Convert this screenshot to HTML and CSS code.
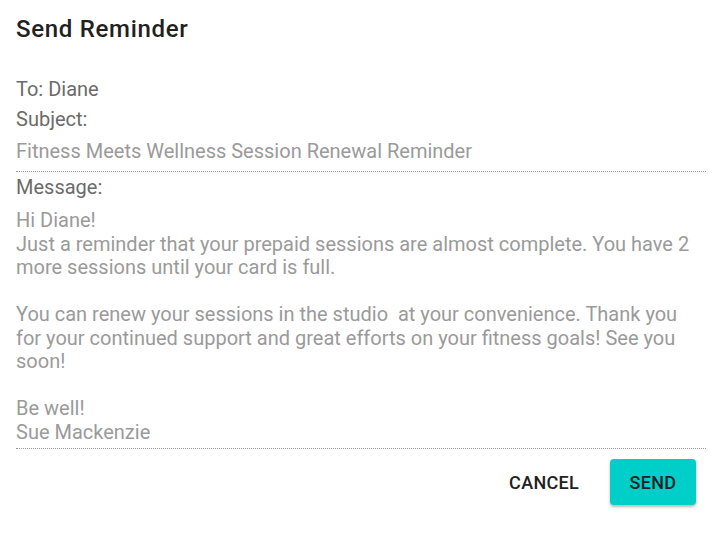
FILE: index.html
```html
<!DOCTYPE html>
<html>
<head>
<meta charset="utf-8">
<link rel="stylesheet" href="styles.css">
</head>
<body>
<div class="dialog">
  <h1 class="title">Send Reminder</h1>
  <div class="content">
    <div class="label">To: Diane</div>
    <div class="label">Subject:</div>
    <div class="input">Fitness Meets Wellness Session Renewal Reminder</div>
    <div class="label">Message:</div>
    <div class="input textarea">Hi Diane!
Just a reminder that your prepaid sessions are almost complete. You have 2 more sessions until your card is full.

You can renew your sessions in the studio  at your convenience. Thank you for your continued support and great efforts on your fitness goals! See you soon!

Be well!
Sue Mackenzie</div>
  </div>
  <div class="actions">
    <button class="btn btn-flat">CANCEL</button>
    <button class="btn btn-raised">SEND</button>
  </div>
</div>
</body>
</html>
```

FILE: styles.css
```css
html, body {
  margin: 0;
  padding: 0;
  background: #ffffff;
}
body {
  font-family: Roboto, "Noto Sans", Arial, sans-serif;
  width: 728px;
  height: 533px;
}
.dialog {
  padding: 15px 22px 0 16px;
}
.title {
  margin: 0;
  font-size: 24px;
  font-weight: 500;
  letter-spacing: 0.7px;
  line-height: 28px;
  color: #212121;
}
.content {
  margin-top: 31px;
}
.label {
  font-size: 20px;
  line-height: 30px;
  color: #6b6b6b;
}
.input {
  font-size: 20px;
  line-height: 24px;
  color: #9a9a9a;
  padding: 5px 0 8px;
  border-bottom: 1px dotted #9a9a9a;
  white-space: pre-wrap;
}
.textarea {
  line-height: 23.5px;
  padding-top: 7px;
  padding-bottom: 4px;
}
.actions {
  display: flex;
  justify-content: flex-end;
  align-items: center;
  gap: 15px;
  margin-top: 10px;
  padding-right: 10px;
}
.btn {
  font-family: Roboto, "Noto Sans", Arial, sans-serif;
  font-size: 18px;
  font-weight: 500;
  letter-spacing: 0.3px;
  color: #212121;
  border: none;
  border-radius: 4px;
  height: 46px;
  padding: 0 16px;
  cursor: pointer;
  background: transparent;
}
.btn-raised {
  width: 86px;
  padding: 0;
  background: #00cec9;
  box-shadow: 0 2px 3px rgba(0, 0, 0, 0.28);
}
```
